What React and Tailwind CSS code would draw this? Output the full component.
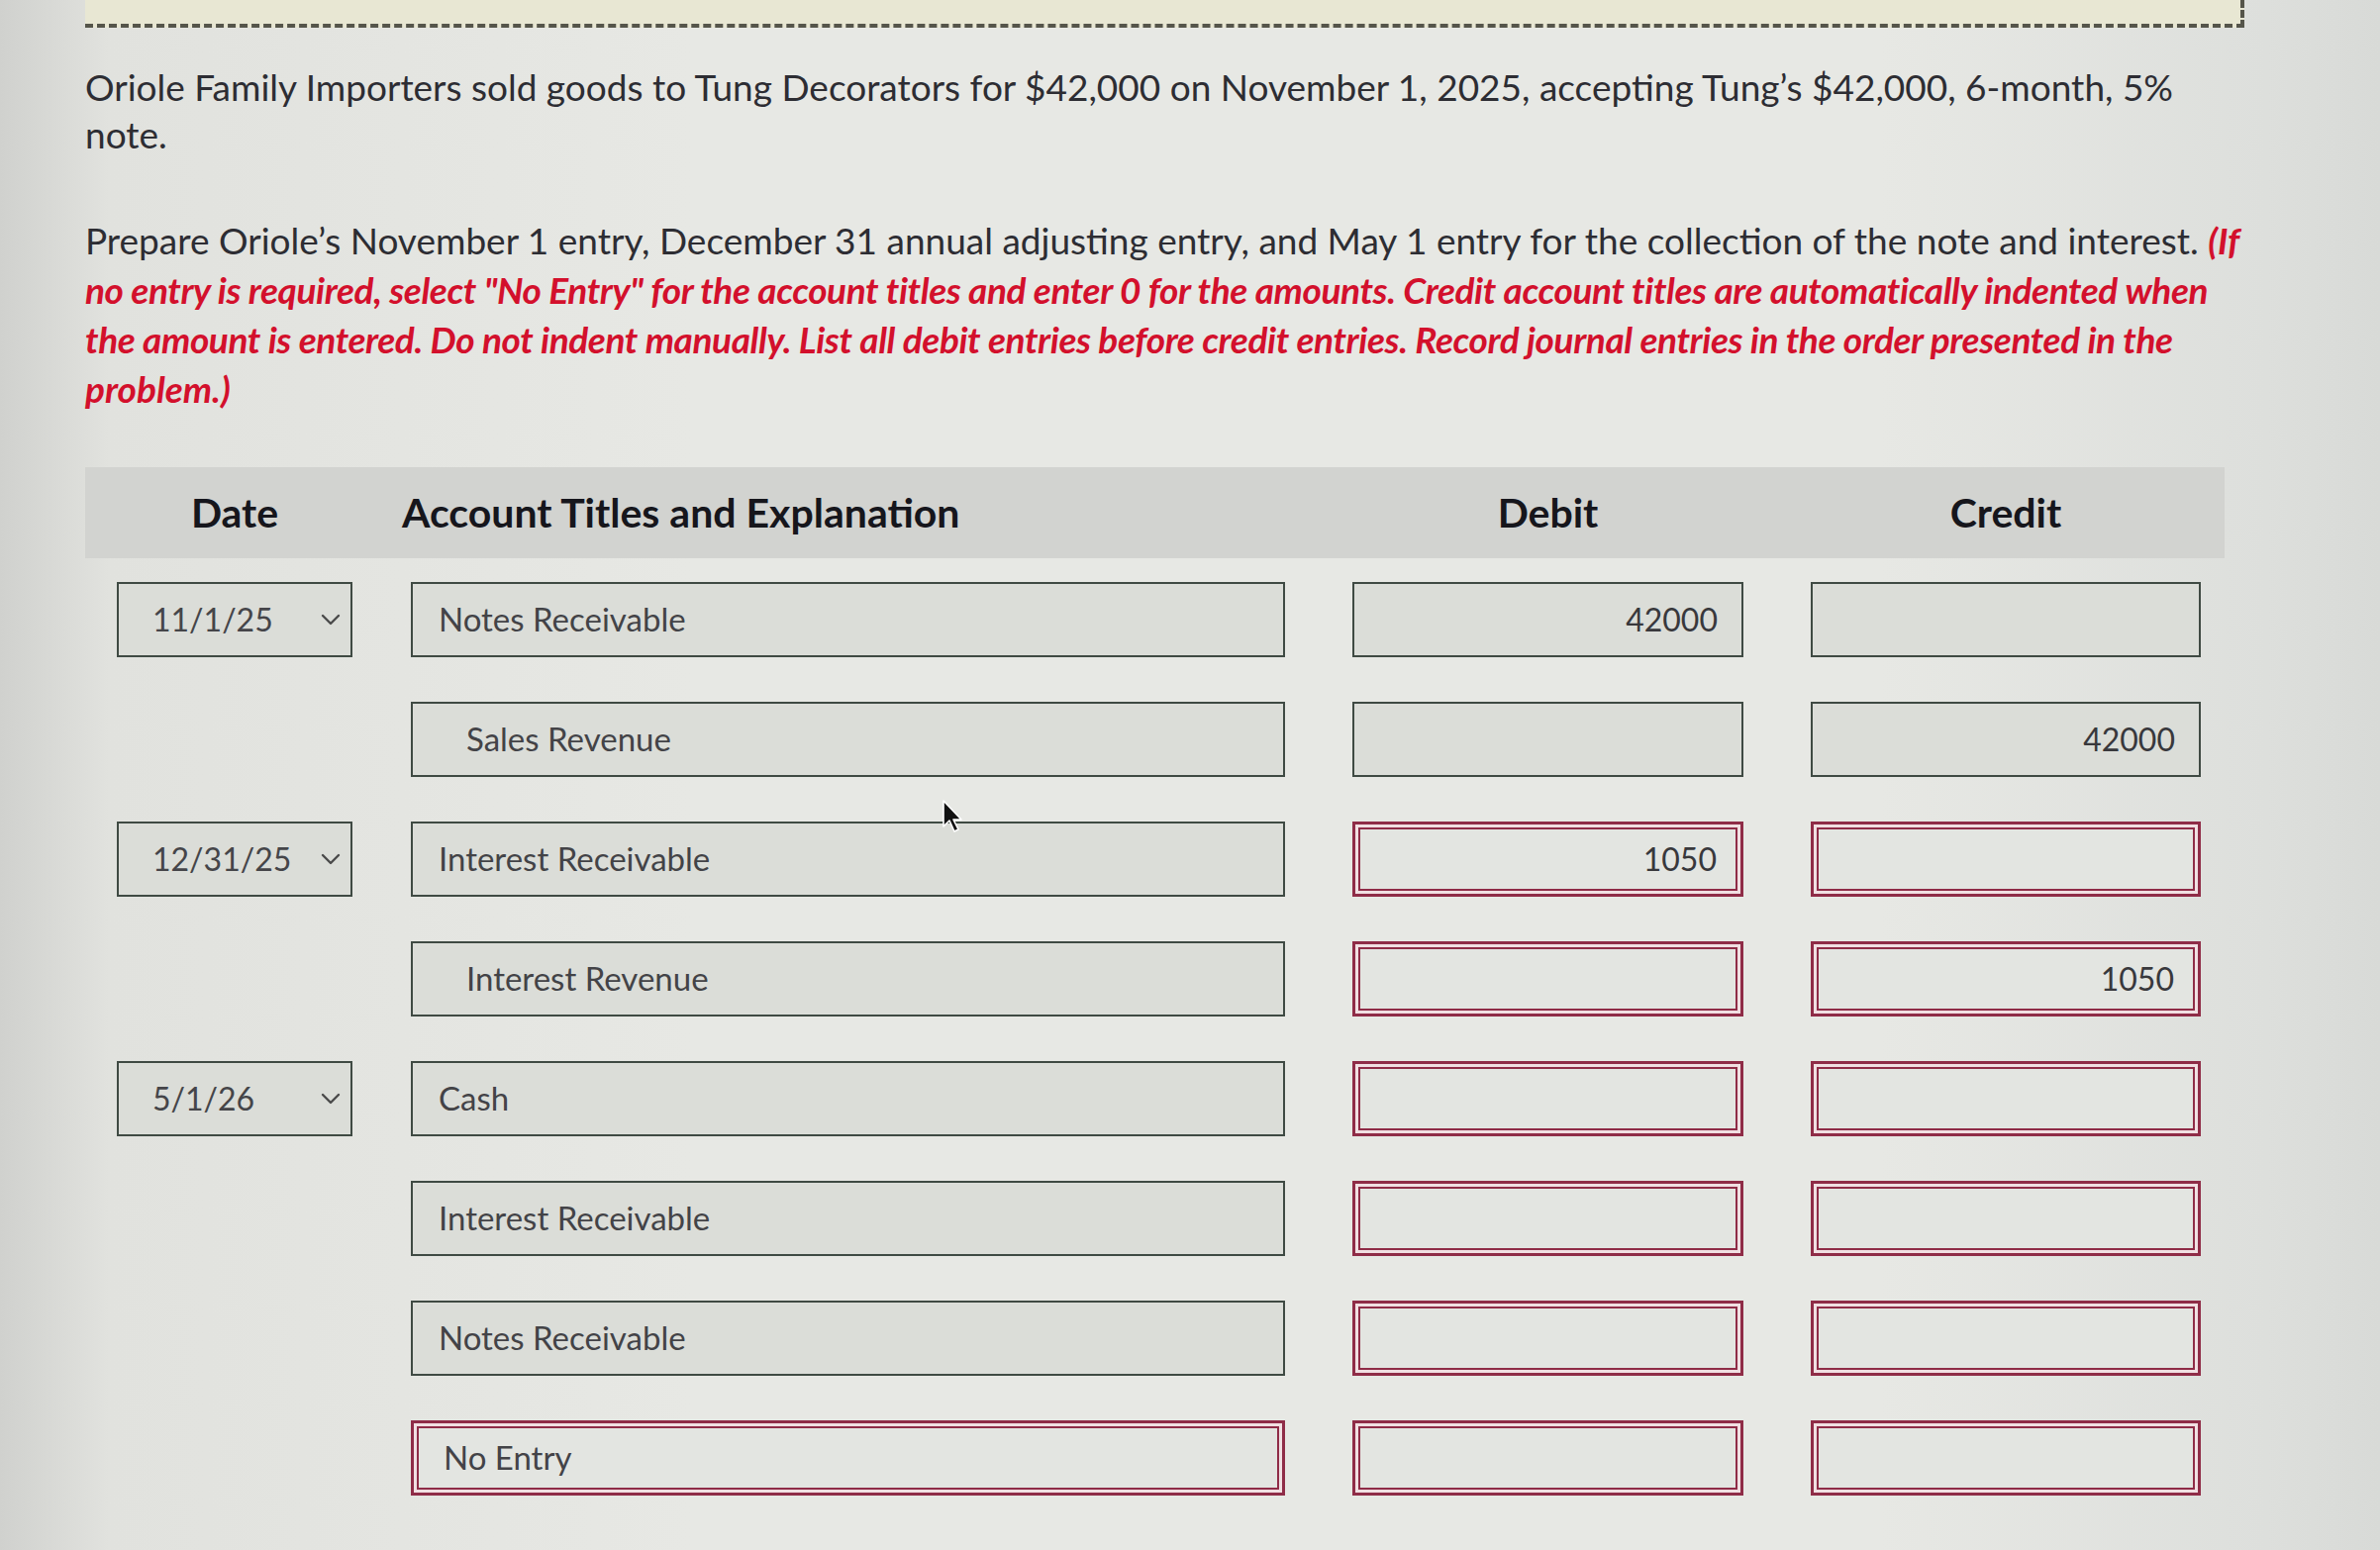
import React from "react";

const rows = [
  { date: "11/1/25", acct: "Notes Receivable", indent: false, debit: "42000", credit: "", redAmt: false, redAcct: false },
  { date: null, acct: "Sales Revenue", indent: true, debit: "", credit: "42000", redAmt: false, redAcct: false },
  { date: "12/31/25", acct: "Interest Receivable", indent: false, debit: "1050", credit: "", redAmt: true, redAcct: false },
  { date: null, acct: "Interest Revenue", indent: true, debit: "", credit: "1050", redAmt: true, redAcct: false },
  { date: "5/1/26", acct: "Cash", indent: false, debit: "", credit: "", redAmt: true, redAcct: false },
  { date: null, acct: "Interest Receivable", indent: false, debit: "", credit: "", redAmt: true, redAcct: false },
  { date: null, acct: "Notes Receivable", indent: false, debit: "", credit: "", redAmt: true, redAcct: false },
  { date: null, acct: "No Entry", indent: false, debit: "", credit: "", redAmt: true, redAcct: true },
];

const greenBox = "border-2 border-[#3f4a43] bg-[#dbddd8]";
const redBox =
  "border-[3px] border-[#8f2c47] bg-[#e3e5e1] shadow-[inset_0_0_0_3px_#f1dfe2,inset_0_0_0_5px_#8f2c47]";

function Chevron() {
  return (
    <svg width="20" height="12" viewBox="0 0 20 12" fill="none">
      <path d="M2 2 L10 10 L18 2" stroke="#4a4a4a" strokeWidth="2.4" strokeLinecap="round" strokeLinejoin="round" />
    </svg>
  );
}

function Cursor() {
  return (
    <svg width="24" height="36" viewBox="0 0 24 36">
      <path d="M2 2 L2 28 L8 22 L13 33 L17 31 L12 21 L20 21 Z" fill="#111" stroke="#fff" strokeWidth="1.6" strokeLinejoin="round" />
    </svg>
  );
}

export default function App() {
  return (
    <div
      className="relative w-[2404px] h-[1566px] overflow-hidden bg-[linear-gradient(to_right,#d0d1ce_0px,#e1e2de_110px,#e7e8e4_700px,#e7e8e4_1900px,#dddfdc_2290px,#d8dad7_2404px)] text-[#2d2d33]"
      style={{ fontFamily: "Lato, 'Open Sans', 'Liberation Sans', sans-serif" }}
    >
      {/* dashed box at top */}
      <div className="ml-[86px] w-[2181px] h-[28px] bg-[#e8e7d3] border-b-[4px] border-r-[4px] border-dashed border-[#55554a]" />

      {/* Paragraph 1 */}
      <div className="ml-[86px] mt-[36px] text-[37px] leading-[48px] whitespace-nowrap">
        <div>Oriole Family Importers sold goods to Tung Decorators for $42,000 on November 1, 2025, accepting Tung’s $42,000, 6-month, 5%</div>
        <div>note.</div>
      </div>

      {/* Paragraph 2 */}
      <div className="ml-[86px] mt-[58px] text-[37px] leading-[50px] whitespace-nowrap">
        <div>
          Prepare Oriole’s November 1 entry, December 31 annual adjusting entry, and May 1 entry for the collection of the note and interest.{" "}
          <span className="text-[#d3102c] font-bold italic">(If</span>
        </div>
        <div className="text-[#d3102c] font-bold italic tracking-[-0.4px]">
          no entry is required, select "No Entry" for the account titles and enter 0 for the amounts. Credit account titles are automatically indented when
        </div>
        <div className="text-[#d3102c] font-bold italic tracking-[-0.4px]">
          the amount is entered. Do not indent manually. List all debit entries before credit entries. Record journal entries in the order presented in the
        </div>
        <div className="text-[#d3102c] font-bold italic">problem.)</div>
      </div>

      {/* Table header */}
      <div className="ml-[86px] mt-[54px] w-[2161px] h-[92px] bg-[#d2d3d0] flex items-center pl-[32px] text-[41px] font-bold text-[#16161c]">
        <div className="w-[238px] text-center">Date</div>
        <div className="ml-[50px] w-[892px]">Account Titles and Explanation</div>
        <div className="ml-[68px] w-[395px] text-center">Debit</div>
        <div className="ml-[68px] w-[394px] text-center">Credit</div>
      </div>

      {/* Rows */}
      <div className="ml-[86px] mt-[24px] pl-[32px] flex flex-col gap-[45px]">
        {rows.map((r, i) => (
          <div key={i} className="flex h-[76px] items-stretch">
            <div className="w-[238px]">
              {r.date && (
                <div className={`h-full ${greenBox} flex items-center justify-between pl-[34px] pr-[10px] text-[32px] text-[#454549]`}>
                  <span>{r.date}</span>
                  <Chevron />
                </div>
              )}
            </div>
            <div
              className={`ml-[59px] w-[883px] flex items-center text-[33px] text-[#434347] ${r.redAcct ? redBox : greenBox} ${
                r.indent ? "pl-[54px]" : r.redAcct ? "pl-[30px]" : "pl-[26px]"
              }`}
            >
              {r.acct}
            </div>
            <div
              className={`ml-[68px] w-[395px] flex items-center justify-end pr-[24px] text-[32px] text-[#38383c] ${
                r.redAmt ? redBox : greenBox
              }`}
            >
              {r.debit}
            </div>
            <div
              className={`ml-[68px] w-[394px] flex items-center justify-end pr-[24px] text-[32px] text-[#38383c] ${
                r.redAmt ? redBox : greenBox
              }`}
            >
              {r.credit}
            </div>
          </div>
        ))}
      </div>

      {/* Mouse cursor */}
      <div className="absolute left-[951px] top-[807px]">
        <Cursor />
      </div>
    </div>
  );
}
